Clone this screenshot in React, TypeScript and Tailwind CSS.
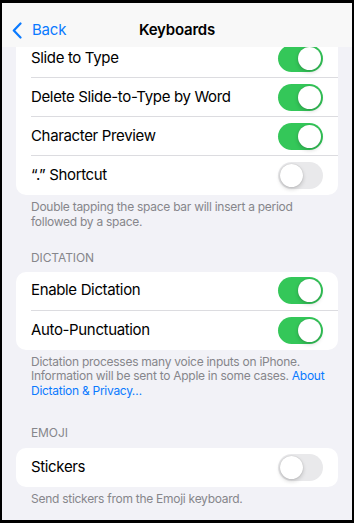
import React from "react";

function Toggle({ on }: { on: boolean }) {
  return (
    <div
      className={
        on
          ? "w-[45px] h-[27px] rounded-full bg-[#34c759] p-[2px] flex justify-end shrink-0"
          : "w-[45px] h-[27px] rounded-full bg-[#e9e9eb] p-[2px] flex justify-start shrink-0"
      }
    >
      <div className="w-[23px] h-[23px] rounded-full bg-white shadow-[0_2px_4px_rgba(0,0,0,0.18),0_0_1px_rgba(0,0,0,0.25)]" />
    </div>
  );
}

function Row({ label, on, last }: { label: string; on: boolean; last?: boolean }) {
  return (
    <div className="pl-[15px]">
      <div
        className={
          last
            ? "h-[39px] pr-[15px] flex items-center justify-between"
            : "h-[39px] pr-[15px] flex items-center justify-between border-b border-[#dcdce0]"
        }
      >
        <span className="text-[15px] tracking-[-0.35px] text-black whitespace-nowrap">{label}</span>
        <Toggle on={on} />
      </div>
    </div>
  );
}

export default function App() {
  return (
    <div
      className="w-[354px] h-[523px] border-black border-t-[3px] border-l-2 border-r-2 border-b-[3px] bg-[#f2f2f7] flex flex-col overflow-hidden"
      style={{ fontFamily: "Inter, 'Noto Sans', sans-serif" }}
    >
      <div className="h-[44px] bg-[#f8f8f8] shrink-0 pt-[10px]">
        <div className="h-full grid grid-cols-[1fr_auto_1fr] items-center">
          <div className="flex items-center pl-[9px] gap-[8px] text-[#0a7aff]">
            <svg width="13" height="17" viewBox="0 0 13 17" fill="none">
              <path d="M9.5 1.5L2.8 8.5l6.7 7" stroke="#0a7aff" strokeWidth="2.2" strokeLinecap="round" strokeLinejoin="round" />
            </svg>
            <span className="text-[15px] tracking-[-0.2px]">Back</span>
          </div>
          <div className="text-[15px] font-semibold tracking-[-0.2px] text-black">Keyboards</div>
          <div />
        </div>
      </div>
      <div className="flex-1 overflow-hidden px-[14px]">
        <div className="bg-white rounded-b-[10px] -mt-[8px]">
          <Row label="Slide to Type" on />
          <Row label="Delete Slide-to-Type by Word" on />
          <Row label="Character Preview" on />
          <Row label="“.” Shortcut" on={false} last />
        </div>
        <p className="px-[15px] pt-[5px] text-[12px] tracking-[-0.27px] leading-[14.5px] text-[#86868b] whitespace-nowrap">
          Double tapping the space bar will insert a period
          <br />
          followed by a space.
        </p>
        <div className="px-[15px] pt-[22px] text-[12px] tracking-[-0.1px] leading-[14.5px] text-[#86868b]">DICTATION</div>
        <div className="bg-white rounded-[10px] mt-[6px]">
          <Row label="Enable Dictation" on />
          <Row label="Auto-Punctuation" on last />
        </div>
        <p className="px-[15px] pt-[5px] text-[12px] tracking-[-0.27px] leading-[14.5px] text-[#86868b] whitespace-nowrap">
          Dictation processes many voice inputs on iPhone.
          <br />
          Information will be sent to Apple in some cases.{" "}
          <span className="text-[#0a7aff]">About</span>
          <br />
          <span className="text-[#0a7aff]">Dictation &amp; Privacy…</span>
        </p>
        <div className="px-[15px] pt-[28px] text-[12px] tracking-[-0.1px] leading-[14.5px] text-[#86868b]">EMOJI</div>
        <div className="bg-white rounded-[10px] mt-[7px]">
          <Row label="Stickers" on={false} last />
        </div>
        <p className="px-[15px] pt-[5px] text-[12px] tracking-[-0.27px] leading-[14.5px] text-[#86868b] whitespace-nowrap">
          Send stickers from the Emoji keyboard.
        </p>
      </div>
    </div>
  );
}
